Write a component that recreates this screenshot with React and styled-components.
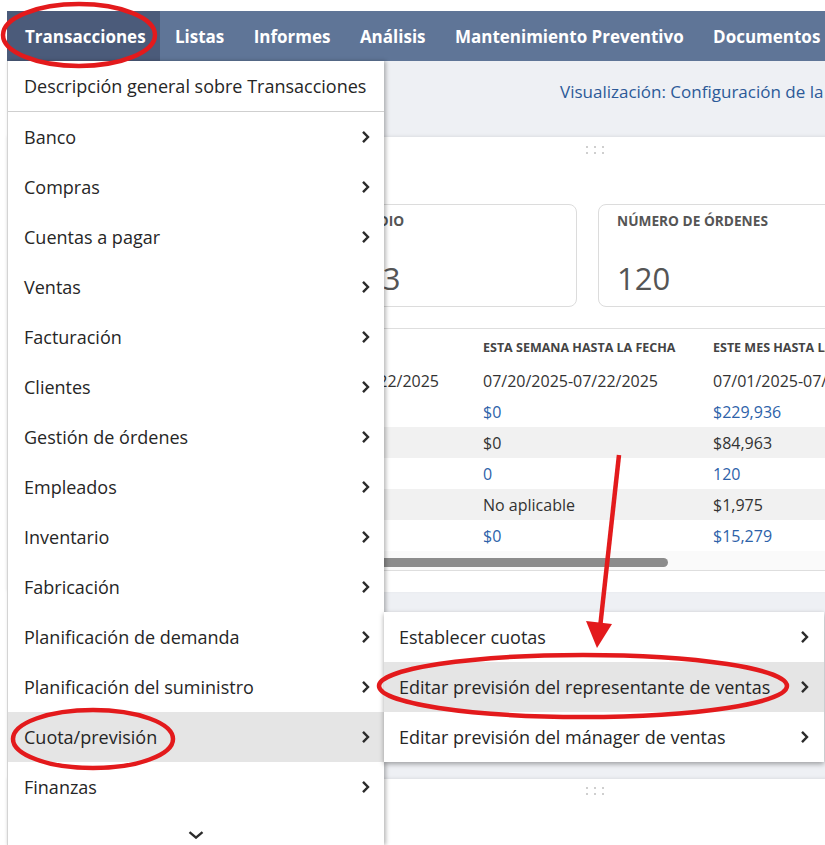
import React from 'react';
import styled, { createGlobalStyle } from 'styled-components';

// menu data
const menuItems = [
  'Banco',
  'Compras',
  'Cuentas a pagar',
  'Ventas',
  'Facturación',
  'Clientes',
  'Gestión de órdenes',
  'Empleados',
  'Inventario',
  'Fabricación',
  'Planificación de demanda',
  'Planificación del suministro',
  'Cuota/previsión',
  'Finanzas'
];

const subItems = [
  'Establecer cuotas',
  'Editar previsión del representante de ventas',
  'Editar previsión del mánager de ventas'
];

const navItems = ['Transacciones', 'Listas', 'Informes', 'Análisis', 'Mantenimiento Preventivo', 'Documentos'];

// the first card sits under the open menu, so only the second and third show text
const cards = [
  { label: '', value: '' },
  { label: 'PROMEDIO', value: '$913' },
  { label: 'NÚMERO DE ÓRDENES', value: '120' }
];

const rows = [
  { tone: 'dark', cells: ['', '07/22/2025-07/22/2025', '07/20/2025-07/22/2025', '07/01/2025-07/22/2025'] },
  { tone: 'link', cells: ['', '', '$0', '$229,936'] },
  { tone: 'dark', cells: ['', '', '$0', '$84,963'] },
  { tone: 'link', cells: ['', '', '0', '120'] },
  { tone: 'dark', cells: ['', '', 'No aplicable', '$1,975'] },
  { tone: 'link', cells: ['', '', '$0', '$15,279'] }
];

const Chevron = () => (
  <svg width="9" height="14" viewBox="0 0 9 14">
    <path d="M2 1.8 L7 7 L2 12.2" fill="none" stroke="#2b2b2b" strokeWidth="2.4" />
  </svg>
);

class App extends React.Component {
  render() {
    return (
      <Page>
        <GlobalStyle />
        <NavBar>
          {navItems.map((item, i) => (
            <NavItem key={item} $active={i === 0}>{item}</NavItem>
          ))}
        </NavBar>

        <Content>
          <TopBar>Visualización: Configuración de la página</TopBar>

          <Portlet>
            <DragHandle>
              {[0, 1, 2, 3, 4, 5].map(i => <Dot key={i} />)}
            </DragHandle>
            <CardRow>
              {cards.map((card, i) => (
                <Card key={i}>
                  <CardLabel>{card.label}</CardLabel>
                  <CardValue>{card.value}</CardValue>
                </Card>
              ))}
            </CardRow>
            <Table>
              <HeadRow>
                <HeadCell></HeadCell>
                <HeadCell></HeadCell>
                <HeadCell>ESTA SEMANA HASTA LA FECHA</HeadCell>
                <HeadCell>ESTE MES HASTA LA FECHA</HeadCell>
              </HeadRow>
              {rows.map((row, i) => (
                <Row key={i} $shaded={i === 2 || i === 4}>
                  {row.cells.map((c, j) => (
                    <Cell key={j} $tone={row.tone}>{c}</Cell>
                  ))}
                </Row>
              ))}
              <ScrollTrack>
                <ScrollThumb />
              </ScrollTrack>
            </Table>
          </Portlet>

          <Spacer />

          <Portlet $tall>
            <DragHandle>
              {[0, 1, 2, 3, 4, 5].map(i => <Dot key={i} />)}
            </DragHandle>
          </Portlet>
        </Content>

        <Menu>
          <MenuHead>Descripción general sobre Transacciones</MenuHead>
          {menuItems.map(item => (
            <MenuItem key={item} $active={item === 'Cuota/previsión'}>
              <span>{item}</span>
              <Chevron />
            </MenuItem>
          ))}
          <More>
            <svg width="16" height="8" viewBox="0 0 16 8">
              <path d="M1.5 1.2 L8 6.6 L14.5 1.2" fill="none" stroke="#2b2b2b" strokeWidth="2.4" />
            </svg>
          </More>
        </Menu>

        <SubMenu>
          {subItems.map((item, i) => (
            <MenuItem key={item} $active={i === 1} $sub>
              <span>{item}</span>
              <Chevron />
            </MenuItem>
          ))}
        </SubMenu>

        <Marks viewBox="0 0 825 845">
          <ellipse cx="79" cy="35" rx="76" ry="31" />
          <ellipse cx="93" cy="739" rx="80" ry="29" />
          <ellipse cx="583" cy="686" rx="204" ry="31" />
          <line x1="619" y1="455" x2="600" y2="628" />
          <polygon points="586,621 612,624 597,648" />
        </Marks>
      </Page>
    );
  }
}

export default App;

const GlobalStyle = createGlobalStyle`
html, body {
  margin: 0;
  padding: 0;
  background: #fff;
}
body {
  font-family: 'Open Sans', 'Liberation Sans', sans-serif;
}
`;

const Page = styled.div`
position: relative;
width: 825px;
height: 845px;
overflow: hidden;
padding: 11px 0 0 7px;
box-sizing: border-box;
`;

const NavBar = styled.nav`
display: flex;
width: 1160px;
height: 50px;
background: #5f7597;
`;

const NavItem = styled.div`
display: flex;
align-items: center;
padding: 0 14.7px;
color: #fff;
font-size: 17px;
font-weight: 700;
white-space: nowrap;
background: ${p => (p.$active ? '#4b5b7a' : 'transparent')};
&:first-child {
  padding-left: 18px;
}
`;

const Content = styled.div`
width: 1160px;
background: #eef0f4;
`;

const TopBar = styled.div`
height: 76px;
box-sizing: border-box;
padding: 19px 0 0 553px;
color: #2c5a98;
font-size: 17px;
line-height: 23px;
white-space: nowrap;
`;

const Portlet = styled.section`
background: #fff;
padding: ${p => (p.$tall ? '8px' : '9px')} 0 21px 16px;
min-height: ${p => (p.$tall ? '80px' : '0')};
box-shadow: 0 -1px 3px rgba(0, 0, 0, 0.08);
`;

const DragHandle = styled.div`
display: grid;
grid-template-columns: repeat(3, 2px);
gap: 4px 6px;
width: 18px;
margin: 0 auto;
`;

const Dot = styled.span`
width: 2px;
height: 2px;
background: #cfcfcf;
`;

const CardRow = styled.div`
display: grid;
grid-template-columns: repeat(3, 266.5px);
gap: 21px;
margin-top: 50px;
`;

const Card = styled.div`
height: 103px;
box-sizing: border-box;
border: 1px solid #dcdcdc;
border-radius: 8px;
padding: 7px 18px 0;
`;

const CardLabel = styled.div`
height: 18px;
color: #555;
font-size: 13.7px;
font-weight: 700;
line-height: 18px;
`;

const CardValue = styled.div`
margin-top: 27px;
color: #555;
font-size: 31px;
font-weight: 400;
line-height: 42px;
`;

const Table = styled.div`
margin-top: 21px;
width: 920px;
border-top: 1px solid #dedede;
border-bottom: 1px solid #dedede;
`;

const HeadRow = styled.div`
display: grid;
grid-template-columns: 241px 219px 230px 230px;
height: 36px;
align-items: center;
`;

const HeadCell = styled.div`
color: #444;
font-size: 12.5px;
font-weight: 700;
white-space: nowrap;
`;

const Row = styled.div`
display: grid;
grid-template-columns: 241px 219px 230px 230px;
height: 31px;
align-items: center;
background: ${p => (p.$shaded ? '#f1f1f1' : 'transparent')};
`;

const Cell = styled.div`
color: ${p => (p.$tone === 'link' ? '#2d62a9' : '#333')};
font-size: 16px;
white-space: nowrap;
`;

const ScrollTrack = styled.div`
height: 19px;
padding-top: 7px;
box-sizing: border-box;
background: #fafafa;
`;

const ScrollThumb = styled.div`
width: 645px;
height: 9px;
border-radius: 5px;
background: #8c8c8c;
`;

const Spacer = styled.div`
height: 187px;
`;

const Menu = styled.div`
position: absolute;
top: 61px;
left: 7px;
bottom: 0;
width: 377px;
background: #fff;
border-left: 1px solid #d4d4d4;
box-sizing: border-box;
box-shadow: 2px 0 4px rgba(0, 0, 0, 0.28);
`;

const MenuHead = styled.div`
height: 50px;
display: flex;
align-items: center;
padding-left: 16px;
border-bottom: 1px solid #cfcfcf;
color: #262626;
font-size: 18px;
white-space: nowrap;
`;

const MenuItem = styled.div`
height: 50px;
display: flex;
align-items: center;
justify-content: space-between;
padding: ${p => (p.$sub ? '0 15px 0 15px' : '0 14px 0 16px')};
color: #262626;
font-size: 18px;
white-space: nowrap;
background: ${p => (p.$active ? '#e5e5e5' : 'transparent')};
`;

const More = styled.div`
display: flex;
justify-content: center;
padding-top: 19px;
`;

const SubMenu = styled.div`
position: absolute;
top: 612px;
left: 384px;
width: 440px;
background: #fff;
box-shadow: 0 2px 5px rgba(0, 0, 0, 0.35);
`;

const Marks = styled.svg`
position: absolute;
top: 0;
left: 0;
width: 825px;
height: 845px;
pointer-events: none;
fill: none;
stroke: #e31a1c;
stroke-width: 4.5;
& polygon {
  fill: #e31a1c;
  stroke: none;
}
`;
